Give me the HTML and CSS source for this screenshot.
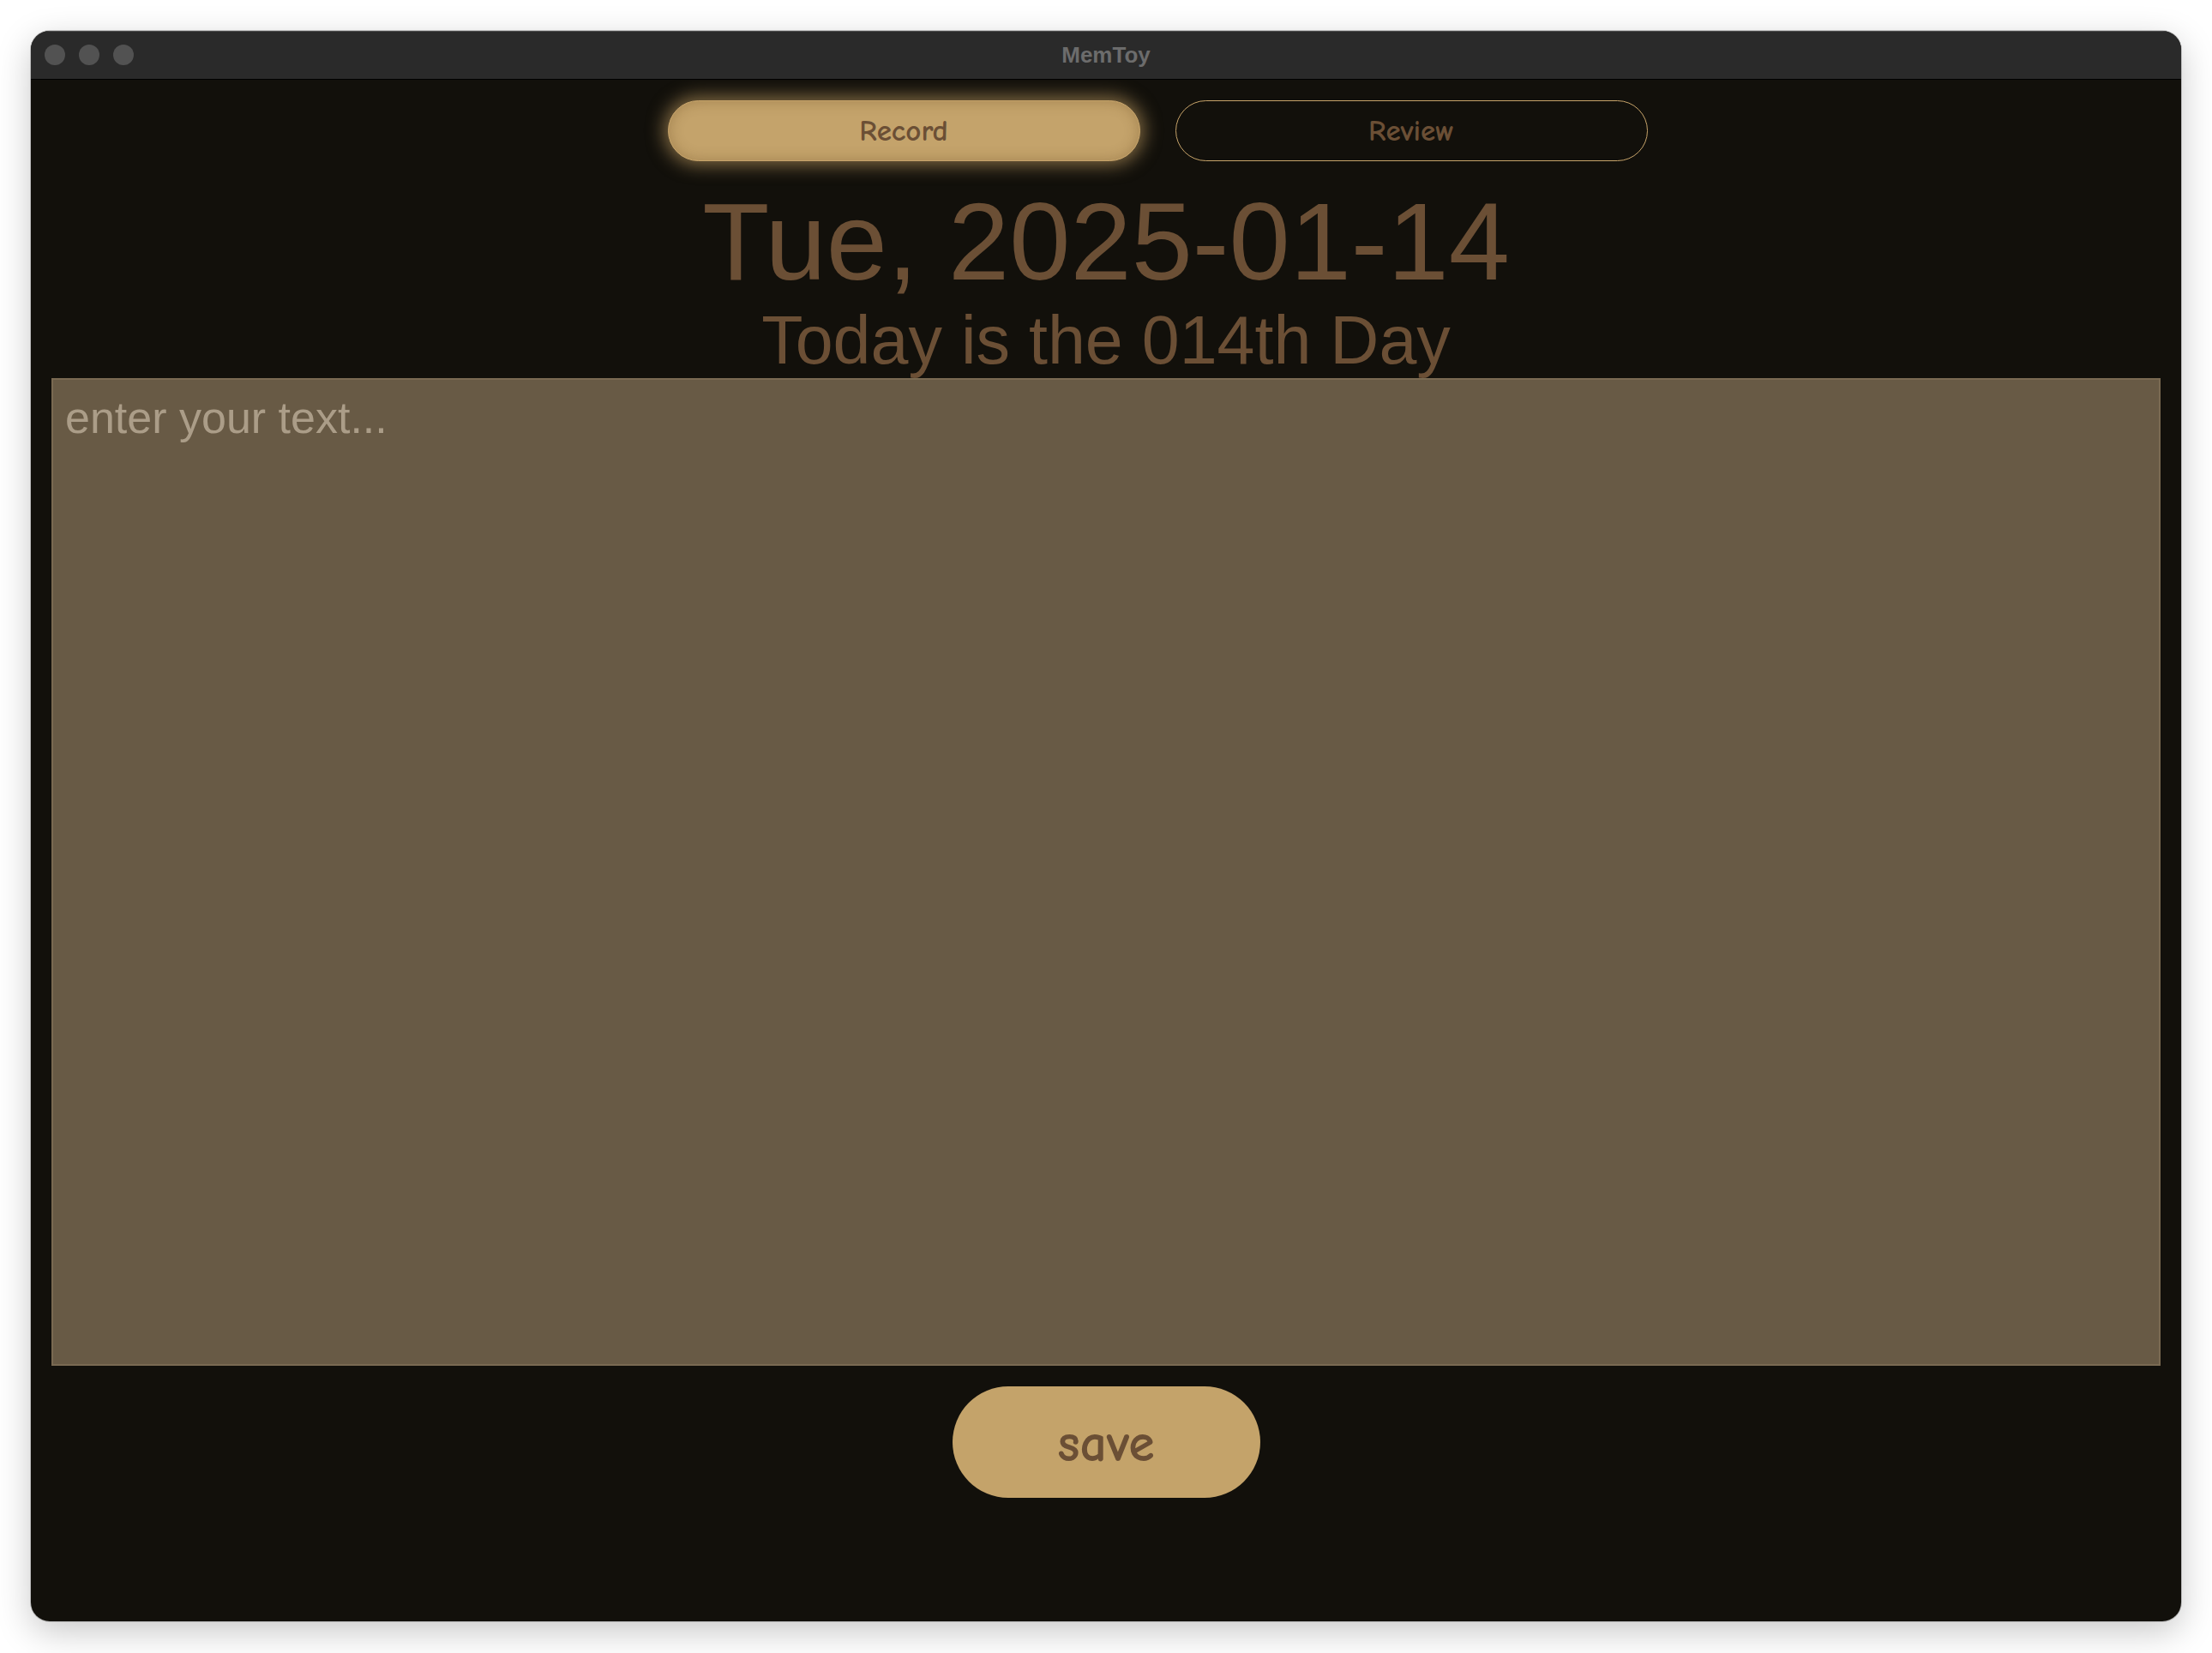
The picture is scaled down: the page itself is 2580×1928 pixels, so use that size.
FILE: index.html
```html
<!DOCTYPE html>
<html lang="en">
<head>
<meta charset="utf-8">
<title>MemToy</title>
<link rel="stylesheet" href="styles.css">
</head>
<body>
<div class="window">
  <div class="titlebar">
    <div class="lights">
      <span class="light"></span>
      <span class="light"></span>
      <span class="light"></span>
    </div>
    <div class="title">MemToy</div>
  </div>
  <main class="content">
    <nav class="tabs">
      <button class="tab tab-active">Record</button>
      <button class="tab">Review</button>
    </nav>
    <h1 class="date">Tue, 2025-01-14</h1>
    <h2 class="daycount">Today is the 014th Day</h2>
    <textarea class="entry" placeholder="enter your text..."></textarea>
    <div class="actions">
      <button class="save">save</button>
    </div>
  </main>
</div>
</body>
</html>
```

FILE: styles.css
```css
html, body {
  margin: 0;
  padding: 0;
  background: #ffffff;
}

body {
  width: 2580px;
  height: 1928px;
  padding: 36px;
  box-sizing: border-box;
}

.window {
  width: 2508px;
  height: 1855px;
  border-radius: 22px;
  overflow: hidden;
  background: #12100b;
  box-shadow: 0 12px 40px rgba(0, 0, 0, 0.22), 0 0 0 1px rgba(0, 0, 0, 0.18);
  display: flex;
  flex-direction: column;
}

.titlebar {
  position: relative;
  height: 55px;
  flex: 0 0 55px;
  background: #2a2a2a;
  border-top: 1px solid #4a4a4a;
  border-bottom: 1px solid #000000;
  box-sizing: content-box;
  display: flex;
  align-items: center;
  justify-content: center;
}

.lights {
  position: absolute;
  left: 16px;
  top: 15px;
  display: flex;
  gap: 16px;
}

.light {
  width: 24px;
  height: 24px;
  border-radius: 50%;
  background: #525252;
}

.title {
  font-family: "Liberation Sans", Arial, sans-serif;
  font-weight: bold;
  font-size: 26px;
  color: #6c6c6c;
  margin-top: -1px;
}

.content {
  flex: 1;
  display: flex;
  flex-direction: column;
  align-items: stretch;
  padding: 24px 24px 0 24px;
}

.tabs {
  display: flex;
  justify-content: center;
  gap: 41px;
  padding-left: 120px;
}

.tab {
  width: 551px;
  height: 71px;
  border-radius: 36px;
  border: 1.5px solid #c6a36a;
  background: transparent;
  color: #6b4f35;
  font-family: "Comic Sans MS", "Comic Neue", "Open Sans", sans-serif;
  font-weight: 700;
  font-size: 35px;
  padding: 0 0 0 0;
  cursor: pointer;
}

.tab-active {
  background: #c4a36b;
  box-shadow: 0 0 20px 5px rgba(196, 160, 100, 0.6), inset 0 0 16px rgba(90, 60, 20, 0.3);
}

.date {
  margin: 22px 0 0 0;
  font-family: "Liberation Sans", Arial, sans-serif;
  font-weight: normal;
  font-size: 128px;
  line-height: 143px;
  color: #6b4f35;
  text-align: center;
}

.daycount {
  margin: 0;
  font-family: "Liberation Sans", Arial, sans-serif;
  font-weight: normal;
  font-size: 79px;
  line-height: 88px;
  color: #6b4f35;
  text-align: center;
}

.entry {
  display: block;
  height: 1152px;
  box-sizing: border-box;
  margin: 0;
  border: 2px solid #7a6a52;
  background: #685a45;
  padding: 14px 14px;
  font-family: "Liberation Sans", Arial, sans-serif;
  font-size: 52px;
  color: #e8dcc8;
  resize: none;
  outline: none;
}

.entry::placeholder {
  color: #ab9d88;
  opacity: 1;
}

.actions {
  display: flex;
  justify-content: center;
  padding-top: 24px;
}

.save {
  width: 359px;
  height: 130px;
  border-radius: 65px;
  border: none;
  background: #c4a36a;
  color: #6b4f35;
  font-family: "Comic Sans MS", "Comic Neue", "Open Sans", sans-serif;
  font-weight: 700;
  font-size: 62px;
  padding: 4px 0 0 0;
  cursor: pointer;
}
```
